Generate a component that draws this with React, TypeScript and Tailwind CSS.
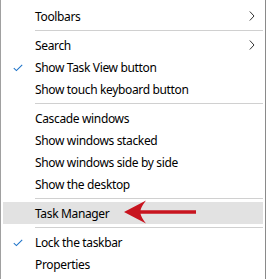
import React from "react";

type Item =
  | { type: "sep" }
  | { type: "item"; label: string; checked?: boolean; submenu?: boolean; active?: boolean };

const items: Item[] = [
  { type: "item", label: "Toolbars", submenu: true },
  { type: "sep" },
  { type: "item", label: "Search", submenu: true },
  { type: "item", label: "Show Task View button", checked: true },
  { type: "item", label: "Show touch keyboard button" },
  { type: "sep" },
  { type: "item", label: "Cascade windows" },
  { type: "item", label: "Show windows stacked" },
  { type: "item", label: "Show windows side by side" },
  { type: "item", label: "Show the desktop" },
  { type: "sep" },
  { type: "item", label: "Task Manager", active: true },
  { type: "sep" },
  { type: "item", label: "Lock the taskbar", checked: true },
  { type: "item", label: "Properties" },
];

const Check = () => (
  <svg width="10" height="8" viewBox="0 0 10 8" className="absolute left-[10px] top-[8px]">
    <path d="M0.8 4.2 L3.4 6.6 L9.2 0.8" fill="none" stroke="#1f74c9" strokeWidth="1.1" />
  </svg>
);

const Chevron = () => (
  <svg width="6" height="10" viewBox="0 0 6 10" className="absolute right-[8px] top-[6px]">
    <path d="M0.8 0.5 L5 5 L0.8 9.5" fill="none" stroke="#333" strokeWidth="1" />
  </svg>
);

const RedArrow = () => (
  <svg width="76" height="26" viewBox="0 0 76 26" className="absolute left-[118px] top-[-3px]">
    <path d="M3 13 L25 1.5 Q20 8 19.5 11.3 L75 11.3 L75 14.7 L19.5 14.7 Q20 18 25 24.5 Z" fill="#c8141f" />
  </svg>
);

export default function App() {
  return (
    <div className="w-[267px] h-[279px] bg-white overflow-hidden">
      <div
        className="w-[266px] h-[279px] bg-white border-l border-l-[#a0a0a0] border-r border-r-[#8a8a8a] px-[2px] pt-[5px] text-[12px] tracking-[-0.35px] text-black"
        style={{ fontFamily: '"Noto Sans", "Open Sans", sans-serif' }}
      >
        {items.map((it, i) =>
          it.type === "sep" ? (
            <div key={i} className="h-[7px] flex items-center pl-[32px]">
              <div className="h-px w-full bg-[#d0d0d0]" />
            </div>
          ) : (
            <div
              key={i}
              className={`relative h-[22px] flex items-center pl-[32px] ${it.active ? "bg-[#e2e2e2]" : ""}`}
            >
              {it.checked && <Check />}
              <span className="leading-none pt-px">{it.label}</span>
              {it.submenu && <Chevron />}
              {it.active && <RedArrow />}
            </div>
          )
        )}
      </div>
    </div>
  );
}
